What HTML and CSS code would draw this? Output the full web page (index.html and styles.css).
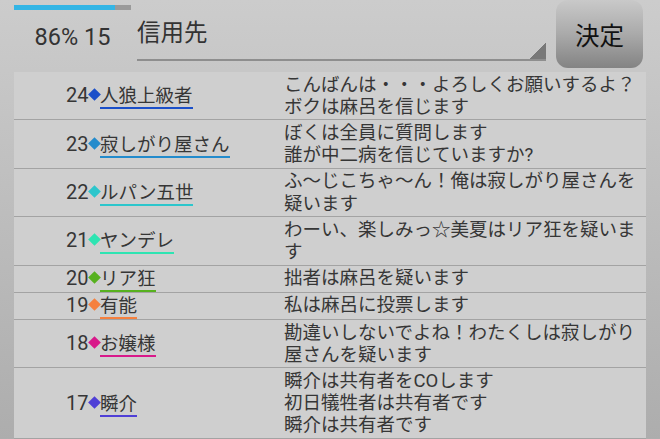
FILE: index.html
```html
<!DOCTYPE html>
<html lang="ja">
<head>
<meta charset="utf-8">
<title>投票</title>
<link rel="stylesheet" href="styles.css">
</head>
<body>
<div class="screen">
  <header class="top">
    <div class="status">
      <div class="progress"><div class="fill" style="width:86%"></div></div>
      <div class="count">86% 15</div>
    </div>
    <div class="spinner">信用先</div>
    <div class="decide">決定</div>
  </header>
  <div class="list">
    <div class="row p24">
      <div class="who"><span class="num">24</span><span class="dia"></span><span class="name">人狼上級者</span></div>
      <div class="msg">こんばんは・・・よろしくお願いするよ？<br>ボクは麻呂を信じます</div>
    </div>
    <div class="row p23">
      <div class="who"><span class="num">23</span><span class="dia"></span><span class="name">寂しがり屋さん</span></div>
      <div class="msg">ぼくは全員に質問します<br>誰が中二病を信じていますか?</div>
    </div>
    <div class="row p22">
      <div class="who"><span class="num">22</span><span class="dia"></span><span class="name">ルパン五世</span></div>
      <div class="msg">ふ〜じこちゃ〜ん！俺は寂しがり屋さんを疑います</div>
    </div>
    <div class="row p21">
      <div class="who"><span class="num">21</span><span class="dia"></span><span class="name">ヤンデレ</span></div>
      <div class="msg">わーい、楽しみっ☆美夏はリア狂を疑います</div>
    </div>
    <div class="row p20">
      <div class="who"><span class="num">20</span><span class="dia"></span><span class="name">リア狂</span></div>
      <div class="msg">拙者は麻呂を疑います</div>
    </div>
    <div class="row p19">
      <div class="who"><span class="num">19</span><span class="dia"></span><span class="name">有能</span></div>
      <div class="msg">私は麻呂に投票します</div>
    </div>
    <div class="row p18">
      <div class="who"><span class="num">18</span><span class="dia"></span><span class="name">お嬢様</span></div>
      <div class="msg">勘違いしないでよね！わたくしは寂しがり屋さんを疑います</div>
    </div>
    <div class="row p17">
      <div class="who"><span class="num">17</span><span class="dia"></span><span class="name">瞬介</span></div>
      <div class="msg">瞬介は共有者をCOします<br>初日犠牲者は共有者です<br>瞬介は共有者です</div>
    </div>
  </div>
</div>
</body>
</html>
```

FILE: styles.css
```css
html, body {
  margin: 0;
  height: 100%;
}

body {
  background: linear-gradient(#cccccc, #adadad);
  font-family: Roboto, "Noto Sans CJK JP", sans-serif;
  color: #363636;
  overflow: hidden;
}

.screen {
  height: 100vh;
  display: flex;
  flex-direction: column;
  padding: 0 14px;
}

.top {
  display: flex;
  flex: none;
  height: 72px;
}

.status {
  width: 117px;
  flex: none;
}

.progress {
  margin-top: 5px;
  height: 5px;
  background: #9a9a9a;
}

.fill {
  height: 100%;
  background: #33b5e5;
}

.count {
  margin-top: 13px;
  font-size: 23.5px;
  line-height: 28px;
  text-align: center;
  color: #333;
}

.spinner {
  flex: none;
  margin-left: 6px;
  width: 409px;
  height: 40px;
  padding-top: 19px;
  font-size: 23.5px;
  line-height: 28px;
  color: #333;
  border-bottom: 2px solid #8e8e8e;
  background: linear-gradient(to bottom right, transparent 50%, #787878 50%) right bottom / 16px 16px no-repeat;
}

.decide {
  flex: none;
  margin-left: 10px;
  width: 87px;
  height: 68px;
  border-radius: 12px;
  background: linear-gradient(#c9c9c9, #aaaaaa 50%, #838383);
  display: flex;
  align-items: center;
  justify-content: center;
  font-size: 24.5px;
  color: #111;
}

.list {
  flex: 1;
  background: #cfcfcf;
}

.row {
  display: grid;
  grid-template-columns: 270px 1fr;
  padding: 1.5px 0;
  border-bottom: 1px solid #a3a3a3;
}

.who {
  align-self: center;
  padding-left: 52px;
  font-size: 18.5px;
  line-height: 22.2px;
  white-space: nowrap;
}

.num {
  font-size: 20px;
}

.dia {
  display: inline-block;
  width: 9px;
  height: 9px;
  margin: 0 1.25px;
  vertical-align: 3px;
  transform: rotate(45deg);
  background: var(--c);
}

.name {
  border-bottom: 2px solid var(--c);
}

.msg {
  font-size: 18.5px;
  line-height: 22.2px;
}

.p24 { --c: #1b4fc9; }
.p23 { --c: #238bcc; }
.p22 { --c: #2cc6cc; }
.p21 { --c: #2ee4b2; }
.p20 { --c: #57b11f; }
.p19 { --c: #f5803e; }
.p18 { --c: #d8198a; }
.p17 { --c: #4f3fd6; }
```
